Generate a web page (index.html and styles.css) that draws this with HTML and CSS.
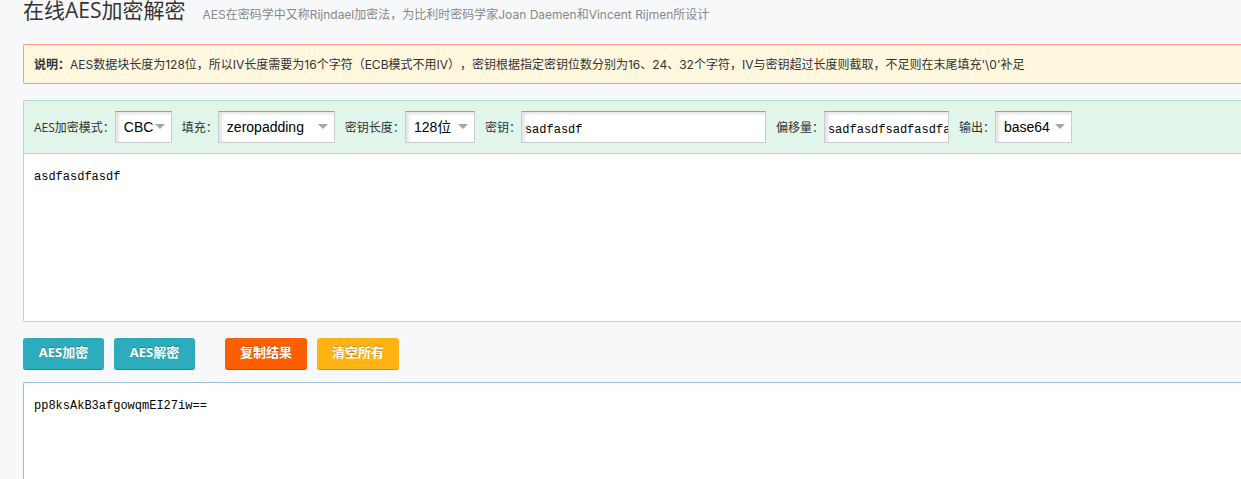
FILE: index.html
```html
<!DOCTYPE html>
<html lang="zh-CN">
<head>
<meta charset="utf-8">
<meta name="viewport" content="width=device-width, initial-scale=1">
<title>在线AES加密解密</title>
<link rel="stylesheet" href="styles.css">
</head>
<body>
<main class="page">
  <header class="heading">
    <h1 class="title">在线AES加密解密</h1>
    <p class="subtitle">AES在密码学中又称Rijndael加密法，为比利时密码学家Joan Daemen和Vincent Rijmen所设计</p>
  </header>

  <p class="notice"><strong>说明：</strong>AES数据块长度为128位，所以IV长度需要为16个字符（ECB模式不用IV），密钥根据指定密钥位数分别为16、24、32个字符，IV与密钥超过长度则截取，不足则在末尾填充'\0'补足</p>

  <section class="panel">
    <div class="options">
      <div class="field">
        <label for="mode">AES加密模式：</label>
        <span class="select select-mode"><select id="mode"><option>CBC</option><option>ECB</option></select></span>
      </div>
      <div class="field">
        <label for="padding">填充：</label>
        <span class="select select-padding"><select id="padding"><option>zeropadding</option></select></span>
      </div>
      <div class="field">
        <label for="bits">密钥长度：</label>
        <span class="select select-bits"><select id="bits"><option>128位</option><option>192位</option><option>256位</option></select></span>
      </div>
      <div class="field">
        <label for="key">密钥：</label>
        <input class="text text-key" id="key" type="text" value="sadfasdf">
      </div>
      <div class="field">
        <label for="iv">偏移量：</label>
        <input class="text text-iv" id="iv" type="text" value="sadfasdfsadfasdfa">
      </div>
      <div class="field">
        <label for="output">输出：</label>
        <span class="select select-output"><select id="output"><option>base64</option><option>hex</option></select></span>
      </div>
    </div>
    <textarea class="area area-source" aria-label="原文" spellcheck="false">asdfasdfasdf</textarea>
  </section>

  <div class="actions">
    <div class="group">
      <button class="btn" type="button">AES加密</button>
      <button class="btn" type="button">AES解密</button>
    </div>
    <div class="group">
      <button class="btn btn-copy" type="button">复制结果</button>
      <button class="btn btn-clear" type="button">清空所有</button>
    </div>
  </div>

  <textarea class="area area-result" aria-label="结果" spellcheck="false">pp8ksAkB3afgowqmEI27iw==</textarea>
</main>
</body>
</html>
```
FILE: styles.css
```css
* {
  box-sizing: border-box;
}

body {
  margin: 0;
  background: #f7f8fa;
  color: #333;
  font: 12px/20px Inter, "Noto Sans CJK SC", sans-serif;
  text-spacing-trim: space-all;
}

.page {
  display: flex;
  flex-direction: column;
  height: 100vh;
  padding-left: 23px;
  overflow: hidden;
}

.heading {
  display: flex;
  align-items: flex-start;
  gap: 17px;
  height: 44px;
  flex: none;
}

.title {
  margin: 0;
  font-family: "Open Sans", "Noto Sans CJK SC", sans-serif;
  font-size: 21px;
  line-height: 20px;
  font-weight: 400;
}

.subtitle {
  margin: 0;
  padding-top: 5px;
  color: #888;
}

.notice {
  flex: none;
  margin: 0 0 16px;
  padding: 10px 10px 8px;
  border: 1px solid #fb9b86;
  border-right: 0;
  border-radius: 2px 0 0 2px;
  background: #fff7de;
}

.panel {
  flex: none;
  border: 1px solid #b1dfc8;
  border-right: 0;
  border-radius: 2px 0 0 2px;
  background: #fff;
}

.options {
  display: flex;
  flex-wrap: wrap;
  gap: 10px;
  padding: 10px;
  border-bottom: 1px solid #b1dfc8;
  background: #e1f5ea;
}

.field {
  display: flex;
  align-items: center;
  font-family: "Open Sans", "Noto Sans CJK SC", sans-serif;
}

.field label {
  padding-top: 2px;
}

.select {
  position: relative;
}

.select::after {
  content: "";
  position: absolute;
  top: 13px;
  right: 7px;
  border: 5px solid transparent;
  border-top-color: #a5a5a5;
  border-bottom: 0;
  pointer-events: none;
}

.select select,
.text {
  display: block;
  width: 100%;
  height: 32px;
  margin: 0;
  border: 1px solid #c8cdd3;
  border-top-color: #989da3;
  border-radius: 0;
  background: #fff;
  box-shadow: inset 3px 2px 3px #e6e6e6;
  color: #000;
  outline: 0;
}

.select select {
  padding: 0 0 0 8px;
  appearance: none;
  font: 14px "Liberation Sans", "Noto Sans CJK SC", sans-serif;
}

.select-mode {
  width: 57px;
}

.select-padding {
  width: 117px;
}

.select-bits {
  width: 70px;
}

.select-output {
  width: 77px;
}

.text,
.area {
  font: 12px/16px "Liberation Mono", "Noto Sans CJK SC", monospace;
}

.text {
  padding: 6px 0 0 3px;
}

.text-key {
  width: 245px;
}

.text-iv {
  width: 125px;
}

.area {
  display: block;
  width: 100%;
  margin: 0;
  padding: 15px 10px;
  border: 0;
  background: #fff;
  color: #000;
  outline: 0;
  resize: none;
}

.area-source {
  height: 167px;
}

.actions {
  display: flex;
  flex: none;
  gap: 30px;
  padding: 16px 0 12px;
}

.group {
  display: flex;
  gap: 10px;
}

.btn {
  min-width: 81px;
  height: 32px;
  padding: 0 15px 3px;
  border: 0;
  border-bottom: 1px solid #1c8b99;
  border-radius: 3px;
  background: #2cacbd;
  color: #fff;
  font: bold 13px/20px "Open Sans", "Noto Sans CJK SC", sans-serif;
  text-shadow: 0 -1px 0 rgba(0, 0, 0, 0.25);
  cursor: pointer;
}

.btn-copy {
  border-bottom-color: #c24a08;
  background: #fc5f00;
}

.btn-clear {
  border-bottom-color: #cf9010;
  background: #ffb414;
}

.area-result {
  flex: 1;
  border: 1px solid #9cc0e0;
  border-width: 1px 0 0 1px;
  border-radius: 2px 0 0 0;
}
```
